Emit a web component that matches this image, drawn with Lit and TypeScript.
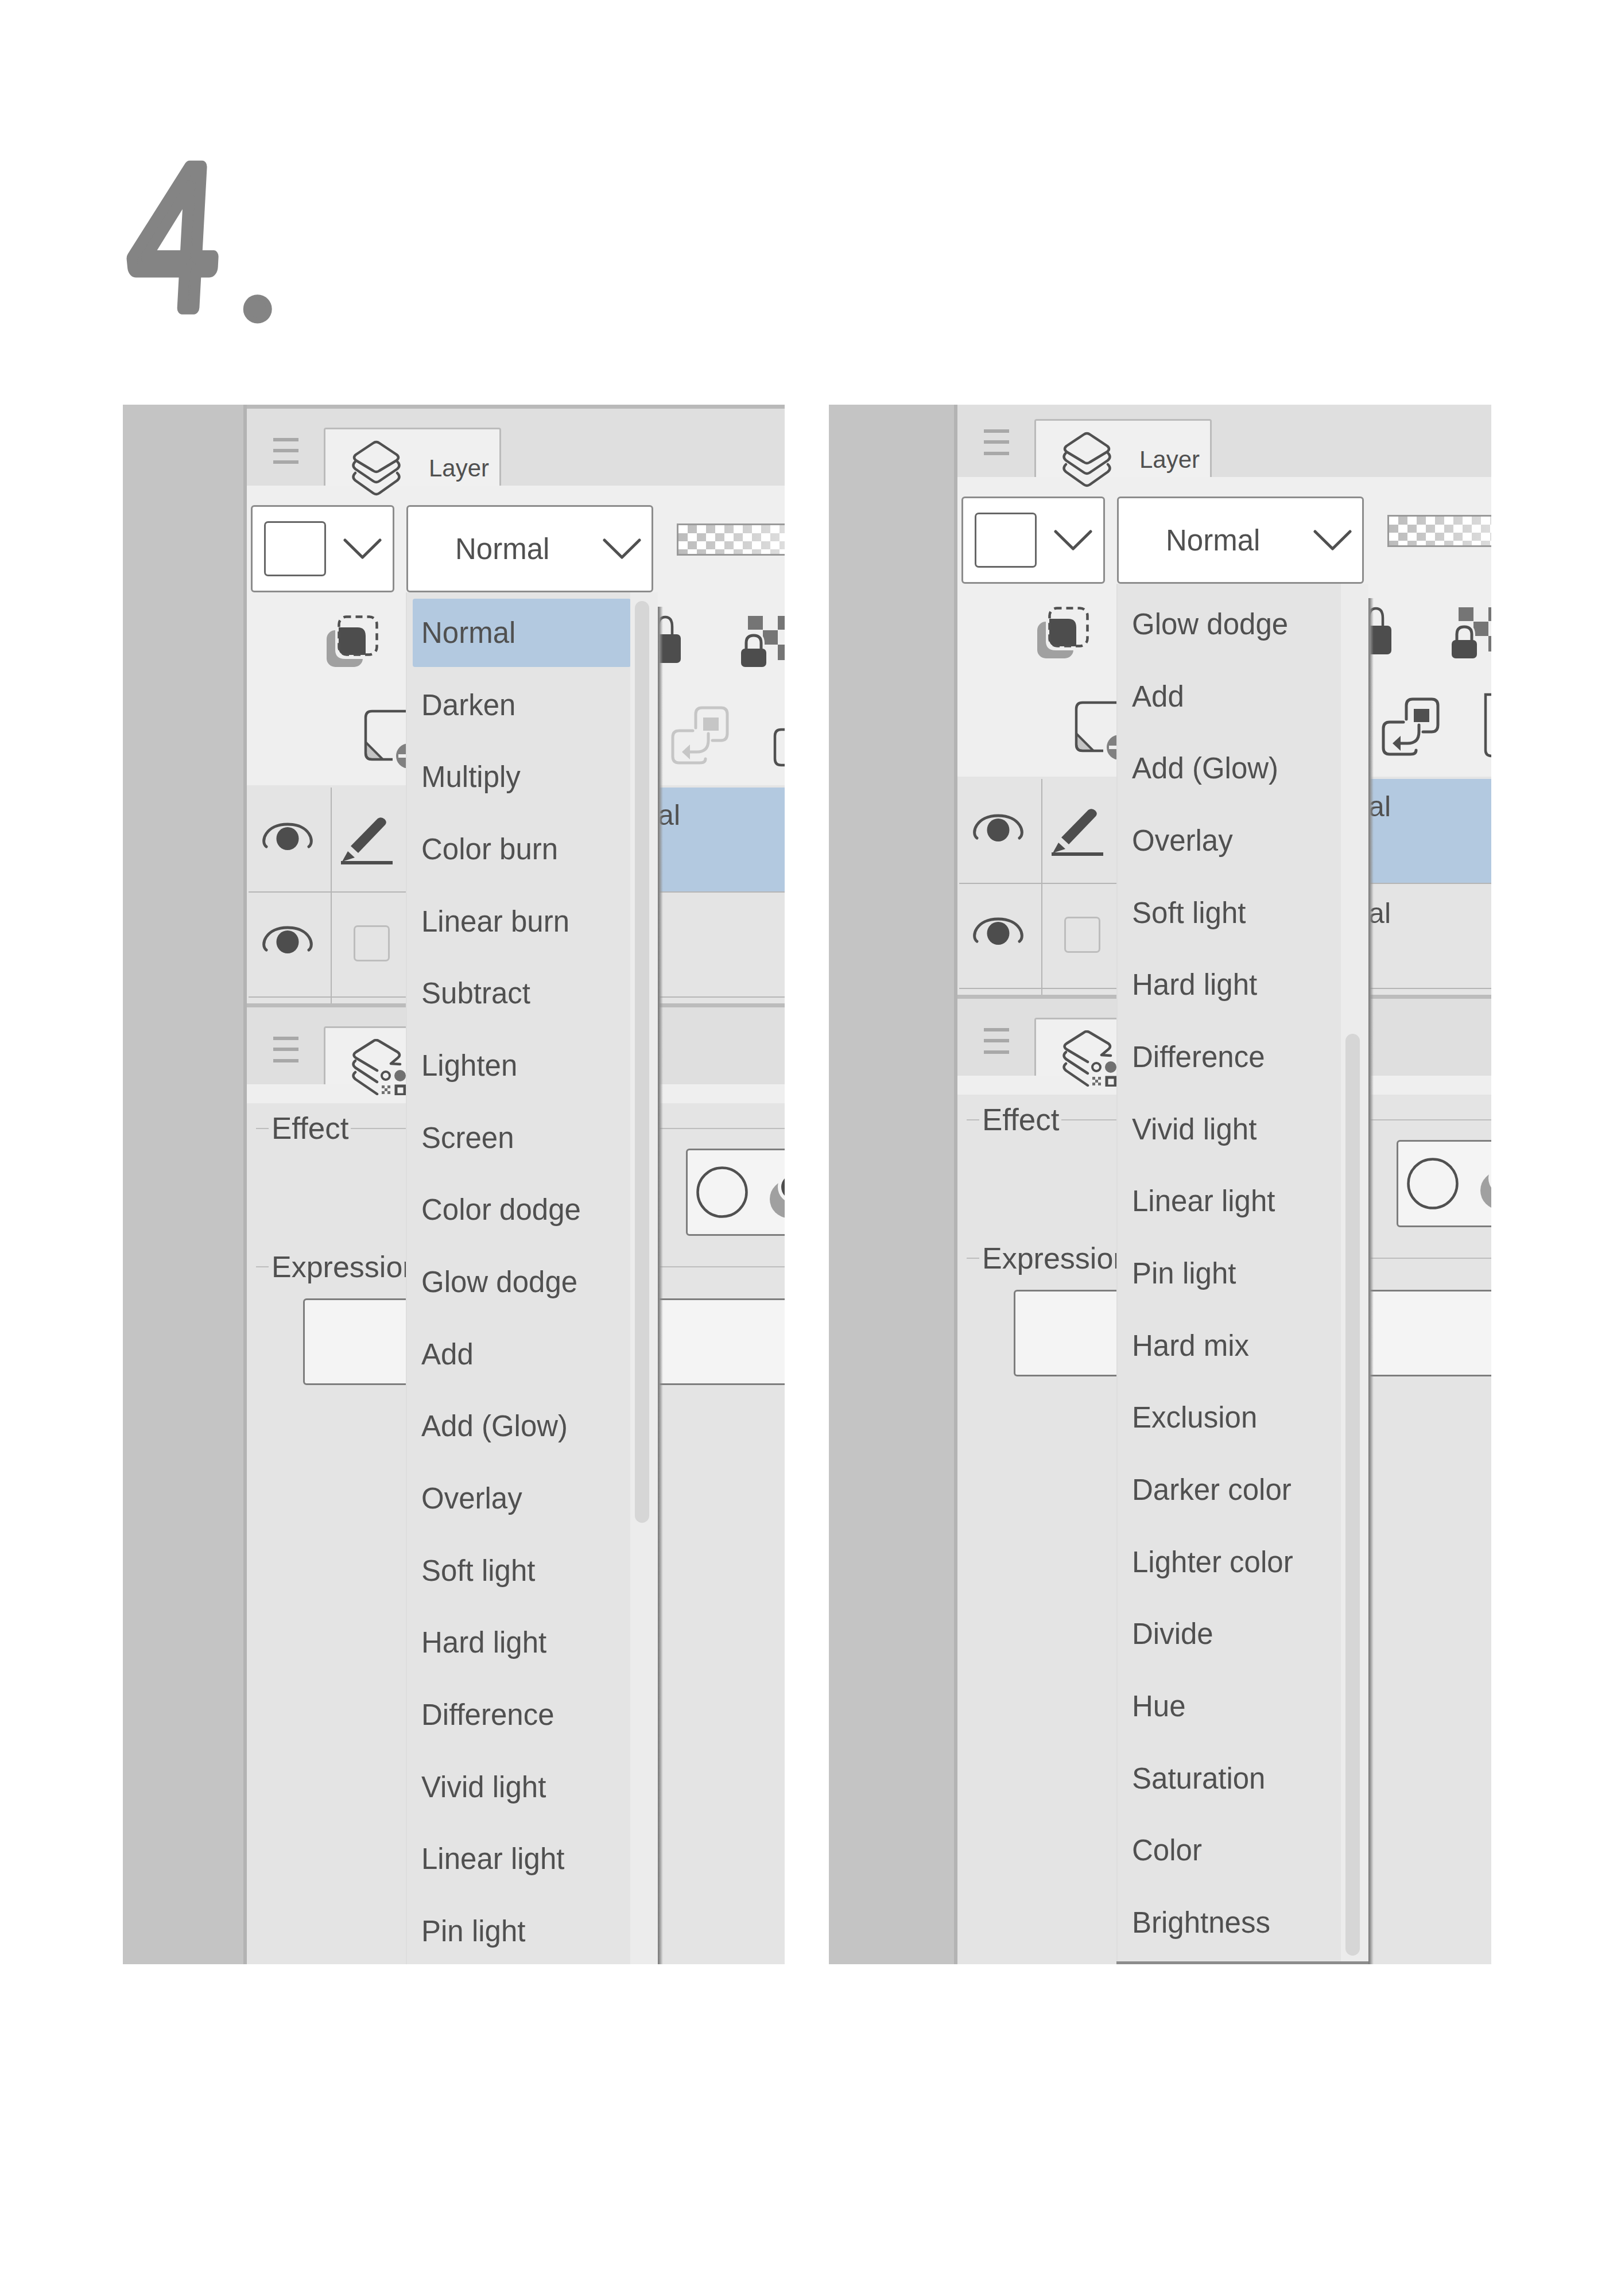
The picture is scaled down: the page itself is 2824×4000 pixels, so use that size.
import { LitElement, html, css, svg } from 'lit';
import { customElement, property } from 'lit/decorators.js';

const BLEND_TOP = ['Normal', 'Darken', 'Multiply', 'Color burn', 'Linear burn', 'Subtract', 'Lighten', 'Screen', 'Color dodge', 'Glow dodge', 'Add', 'Add (Glow)', 'Overlay', 'Soft light', 'Hard light', 'Difference', 'Vivid light', 'Linear light', 'Pin light'];
const BLEND_BOTTOM = ['Glow dodge', 'Add', 'Add (Glow)', 'Overlay', 'Soft light', 'Hard light', 'Difference', 'Vivid light', 'Linear light', 'Pin light', 'Hard mix', 'Exclusion', 'Darker color', 'Lighter color', 'Divide', 'Hue', 'Saturation', 'Color', 'Brightness'];

const DARK = '#505050';

// icons, all drawn at the size they have in the reference
const chevron = html`<svg class="chevron" width="67" height="37" viewBox="0 0 67 37"><path d="M3 3 L33.5 33 L64 3" fill="none" stroke="${DARK}" stroke-width="5" stroke-linecap="round" stroke-linejoin="round"/></svg>`;

const menuIcon = html`<svg width="44" height="45" viewBox="0 0 44 45"><g fill="#a8a8a8"><rect y="0" width="44" height="6"/><rect y="19" width="44" height="6"/><rect y="39" width="44" height="6"/></g></svg>`;

const layersIcon = html`<svg class="tab-icon" width="85" height="98" viewBox="0 0 85 98"><g fill="none" stroke="${DARK}" stroke-width="4.5" stroke-linejoin="round" stroke-linecap="round"><path d="M37 5 Q42.5 1 48 5 L78 25 Q84 30 78 35 L48 53 Q42.5 57 37 53 L7 35 Q1 30 7 25 Z"/><path d="M6 37 Q-1 44 6 50 L37 71 Q42.5 75 48 71 L79 50 Q86 44 79 37"/><path d="M6 57 Q-1 64 6 70 L37 92 Q42.5 96 48 92 L79 70 Q86 64 79 57"/></g></svg>`;

const propertyIcon = html`<svg class="tab-icon" width="97" height="98" viewBox="0 0 97 98"><g fill="none" stroke="${DARK}" stroke-width="4.5" stroke-linejoin="round" stroke-linecap="round"><path d="M44 55 L7 33 Q0 28 7 23 L37 4 Q42 0 48 4 L80 23 Q86 28 80 33 L68 43 L84 44"/><path d="M6 38 Q-1 44 6 50 L44 75"/><path d="M6 58 Q-1 64 6 70 L44 96"/></g><circle cx="59" cy="64" r="7" fill="none" stroke="${DARK}" stroke-width="4"/><circle cx="84" cy="64" r="10" fill="#707070"/><g fill="#707070"><rect x="52" y="81" width="5" height="5"/><rect x="62" y="81" width="5" height="5"/><rect x="57" y="86" width="5" height="5"/><rect x="52" y="91" width="5" height="5"/><rect x="62" y="91" width="5" height="5"/></g><rect x="77" y="82" width="15" height="15" fill="none" stroke="${DARK}" stroke-width="5"/></svg>`;

const selectionIcon = html`<svg width="90" height="90" viewBox="0 0 90 90"><rect x="0" y="26" width="63" height="64" rx="15" fill="#a0a0a0"/><path d="M15 15 H74 V76 H32 Q15 76 15 60 Z" fill="#efefef"/><path d="M21 21 H54 Q68 21 68 36 V69 H34 Q21 69 21 56 Z" fill="#4d4d4d"/><rect x="21.5" y="2.5" width="66" height="66" rx="13" fill="none" stroke="${DARK}" stroke-width="4.5" stroke-dasharray="12 8" stroke-dashoffset="4"/></svg>`;

const lockIcon = html`<svg width="44" height="90" viewBox="0 0 44 90"><path d="M5 35 V20 Q5 3 17 3 Q29 3 29 20 V35" fill="none" stroke="${DARK}" stroke-width="4.5"/><rect x="0" y="33" width="44" height="50" rx="7" fill="#4d4d4d"/></svg>`;

const checkerLockIcon = html`<svg width="90" height="90" viewBox="0 0 90 90"><g fill="#757575"><rect x="12" y="1" width="26" height="24"/><rect x="38" y="26" width="26" height="25"/><rect x="64" y="1" width="26" height="24"/><rect x="64" y="51" width="26" height="27"/></g><path d="M9 60 V48 Q9 35 22 35 Q35 35 35 48 V60" fill="none" stroke="#efefef" stroke-width="12"/><path d="M9 62 V48 Q9 35 22 35 Q35 35 35 48 V62" fill="none" stroke="${DARK}" stroke-width="5"/><rect x="0" y="58" width="44" height="32" rx="7" fill="#4d4d4d"/></svg>`;

const newLayerIcon = html`<svg width="108" height="108" viewBox="0 0 108 108"><path d="M3 63 L33 93 H14 Q3 93 3 82 Z" fill="#c4c4c4" stroke="${DARK}" stroke-width="4"/><path d="M90 9 H14 Q3 9 3 20 V82 Q3 93 14 93 H50" fill="none" stroke="${DARK}" stroke-width="4.5"/><circle cx="78" cy="87" r="22" fill="#808080"/><rect x="60" y="84" width="36" height="6" fill="#eee"/></svg>`;

const mergeIcon = (color: string) => html`<svg width="101" height="102" viewBox="0 0 101 102"><g fill="none" stroke="${color}" stroke-width="5" stroke-linecap="round"><path d="M43 38 V14 Q43 3 54 3 H87 Q98 3 98 14 V48 Q98 60 87 60 H72"/><path d="M38 43 H14 Q3 43 3 54 V88 Q3 99 14 99 H50 Q60 99 60 92"/><path d="M65 48 V60 Q65 80 45 80 H30"/></g><path d="M19 80 L33 67 V93 Z" fill="${color}"/><rect x="56" y="20" width="27" height="23" fill="${color}"/></svg>`;

const pageIcon = (tall: boolean) => svg`<svg class="page-icon" width="60" height="108" viewBox="0 0 60 108"><path d="${tall ? 'M60 -5 H3 V92 Q3 102 14 102 H60' : 'M60 41 H14 Q3 41 3 52 V92 Q3 103 14 103 H60'}" fill="${tall ? '#f4f4f4' : 'none'}" stroke="${DARK}" stroke-width="4.5"/></svg>`;

const eyeIcon = html`<svg width="90" height="49" viewBox="0 0 90 49"><path d="M8 42 C-3 34 6 3 45 3 C84 3 93 34 82 42" fill="none" stroke="${DARK}" stroke-width="5" stroke-linecap="round"/><ellipse cx="45" cy="28" rx="19.5" ry="20" fill="#4d4d4d"/></svg>`;

const pencilIcon = html`<svg width="90" height="84" viewBox="0 0 90 84"><path d="M64 3 Q70 -1 76 4 Q81 9 77 14 L30 63 L17 51 Z" fill="#4d4d4d"/><path d="M2 78 L12 60 L24 71 Z" fill="#4d4d4d"/><rect x="0" y="77" width="90" height="6" fill="#4d4d4d"/></svg>`;

@customElement('layer-panel')
class LayerPanel extends LitElement {
  static styles = css`
    :host {
      display: flex;
      height: 2717px;
      font-family: 'Liberation Sans', Arial, sans-serif;
      color: #505050;
    }

    .sidebar {
      background: #c4c4c4;
      border-right: 6px solid #b3b3b3;
      flex: none;
    }

    .main {
      flex: 1;
      min-width: 0;
      overflow: hidden;
    }

    .inner {
      position: relative;
      height: 2800px;
      background: #e4e4e4;
    }

    .top-line {
      height: 7px;
      background: #b9b9b9;
    }

    .tabbar {
      display: flex;
      height: 134px;
      background: #dfdfdf;
    }

    .menu-btn {
      width: 134px;
      padding: 51px 0 0 46px;
      box-sizing: border-box;
      flex: none;
    }

    .tab {
      display: flex;
      align-items: flex-start;
      box-sizing: border-box;
      height: 101px;
      margin-top: 33px;
      padding: 19px 0 0 46px;
      background: #f0f0f0;
      border: solid #bbb;
      border-width: 3px 3px 0 3px;
      border-radius: 4px 4px 0 0;
    }

    .tab.layer {
      width: 309px;
    }

    .tab.property {
      width: 420px;
    }

    .tab-icon {
      flex: none;
    }

    .tab-label {
      margin: 28px 0 0 49px;
      font-size: 42px;
      line-height: 42px;
    }

    .tools {
      height: 522px;
      box-sizing: border-box;
      padding-top: 34px;
      background: #efefef;
    }

    .selects {
      display: flex;
      align-items: flex-start;
      padding-left: 7px;
      gap: 21px;
    }

    .select {
      display: flex;
      align-items: center;
      box-sizing: border-box;
      height: 152px;
      background: #fff;
      border: 3px solid #8c8c8c;
      border-radius: 6px;
      flex: none;
    }

    .select.color {
      width: 250px;
      padding-left: 20px;
    }

    .select.blend {
      width: 430px;
      padding-left: 82px;
      font-size: 51px;
    }

    .swatch {
      box-sizing: border-box;
      flex: none;
      width: 108px;
      height: 96px;
      border: 3px solid #666;
      border-radius: 7px;
      background: #fff;
    }

    .chevron {
      flex: none;
    }

    .color .chevron {
      margin-left: 30px;
    }

    .blend .chevron {
      margin-left: auto;
      margin-right: 18px;
    }

    .opacity {
      box-sizing: border-box;
      flex: none;
      width: 340px;
      height: 56px;
      margin: 32px 0 0 20px;
      border: 3px solid #999;
      background:
        linear-gradient(90deg, rgba(255, 255, 255, 0), rgba(255, 255, 255, 0.9)),
        repeating-conic-gradient(from 90deg, #fff 0 25%, #bcbcbc 0 50%) 0 0 / 32px 28px;
    }

    .icons {
      display: flex;
      align-items: flex-start;
      height: 90px;
      margin-top: 40px;
      padding-left: 139px;
    }

    .icons > * {
      flex: none;
    }

    .icons.lower {
      height: 108px;
      margin-top: 68px;
      padding-left: 204px;
    }

    .lock {
      margin-left: 483px;
    }

    .checker-lock {
      margin-left: 105px;
    }

    .merge {
      margin-left: 427px;
    }

    .page {
      margin-left: 77px;
    }

    .page-icon {
      overflow: visible;
    }

    .layers {
      padding-top: 4px;
    }

    .row {
      display: flex;
      height: 183px;
      box-sizing: border-box;
      margin-left: 3px;
      border-bottom: 2px solid #b5b5b5;
    }

    .eye-cell {
      box-sizing: border-box;
      flex: none;
      width: 145px;
      padding: 61px 0 0 23px;
      border-right: 2px solid #b5b5b5;
    }

    .row.second .eye-cell {
      padding-top: 58px;
    }

    .kind-cell {
      flex: none;
      box-sizing: border-box;
      width: 131px;
      padding: 51px 0 0 16px;
    }

    .row.second .kind-cell {
      padding: 57px 0 0 38px;
    }

    .check {
      box-sizing: border-box;
      width: 63px;
      height: 63px;
      border: 3px solid #bdbdbd;
      border-radius: 7px;
    }

    .name-cell {
      flex: 1;
      width: 476px;
      padding-top: 18px;
      font-size: 50px;
      line-height: 60px;
    }

    .row.active .name-cell {
      background: #b3c9e0;
    }

    .row.second .name-cell {
      padding-top: 21px;
    }

    .name {
      display: block;
      width: 476px;
      text-align: right;
      white-space: nowrap;
    }

    .tail {
      box-sizing: border-box;
      width: 148px;
      height: 10px;
      border-right: 2px solid #b5b5b5;
    }

    .split {
      height: 7px;
      background: #bcbcbc;
    }

    .tab-foot {
      height: 33px;
      background: #efefef;
    }

    .group-title {
      display: flex;
      align-items: center;
      height: 60px;
      padding-left: 16px;
      font-size: 53px;
      line-height: 60px;
      white-space: nowrap;
    }

    .group-title.effect {
      margin-top: 14px;
    }

    .group-title.expression {
      margin-top: 24px;
      font-size: 52px;
    }

    .group-title::before {
      content: '';
      flex: none;
      width: 22px;
      height: 2px;
      margin-right: 5px;
      background: #bdbdbd;
    }

    .group-title::after {
      content: '';
      flex: 1;
      height: 2px;
      margin-left: 3px;
      background: #bdbdbd;
    }

    .effects {
      display: flex;
      align-items: center;
      box-sizing: border-box;
      width: 400px;
      height: 152px;
      margin: 5px 0 0 765px;
      padding-left: 15px;
      gap: 38px;
      background: #f4f4f4;
      border: 3px solid #7d7d7d;
      border-radius: 6px;
    }

    .effects svg {
      flex: none;
    }

    .expression-box {
      box-sizing: border-box;
      width: 1000px;
      height: 151px;
      margin: 25px 0 0 98px;
      background: #f4f4f4;
      border: 3px solid #7d7d7d;
      border-radius: 6px;
    }

    /* the open blend mode list lies over the whole panel */
    .menu {
      position: absolute;
      left: 277px;
      top: 327px;
      display: flex;
      width: 439px;
      background: #e4e4e4;
      box-sizing: border-box;
    }

    .menu::after {
      content: '';
      position: absolute;
      top: 25px;
      bottom: -5px;
      right: -9px;
      width: 9px;
      background: linear-gradient(90deg, #777, #8f8f8f 30%, rgba(140, 140, 140, 0));
    }

    .menu.ended {
      border-bottom: 5px solid #8c8c8c;
    }

    .list {
      display: flex;
      flex-direction: column;
      gap: 6.67px;
      box-sizing: border-box;
      width: 391px;
      padding: 11px 0 0 10px;
      border-left: 2px solid #dedede;
      font-size: 51px;
    }

    .item {
      box-sizing: border-box;
      flex: none;
      width: 380px;
      height: 119px;
      padding-left: 15px;
      line-height: 119px;
      border-radius: 4px;
      white-space: nowrap;
    }

    .item.selected {
      background: #b3c9e0;
    }

    .track {
      flex: 1;
      padding-left: 8px;
      background: #ececec;
    }

    .thumb {
      width: 25px;
      height: 1606px;
      border-radius: 13px;
      background: #d6d6d6;
    }
  `;

  @property({ type: Array }) items: string[] = [];
  @property({ type: Number }) selected = -1;
  @property({ type: Number }) sidebar = 210;
  @property({ type: Number }) scroll = 0;
  @property({ type: Number }) thumb = 15;
  @property({ type: Number }) menuHeight = 2500;
  @property({ type: Boolean }) ended = false;
  @property({ type: Boolean }) enabled = false;
  @property({ type: String }) second = '';

  render() {
    return html`
      <div class="sidebar" style="width:${this.sidebar}px"></div>
      <div class="main">
        <div class="inner" style="margin-top:${-this.scroll}px">
          <div class="top-line"></div>
          <div class="tabbar">
            <div class="menu-btn">${menuIcon}</div>
            <div class="tab layer">${layersIcon}<span class="tab-label">Layer</span></div>
          </div>
          <div class="tools">
            <div class="selects">
              <div class="select color"><div class="swatch"></div>${chevron}</div>
              <div class="select blend"><span>Normal</span>${chevron}</div>
              <div class="opacity"></div>
            </div>
            <div class="icons">
              ${selectionIcon}
              <div class="lock">${lockIcon}</div>
              <div class="checker-lock">${checkerLockIcon}</div>
            </div>
            <div class="icons lower">
              ${newLayerIcon}
              <div class="merge">${mergeIcon(this.enabled ? DARK : '#c6c6c6')}</div>
              <div class="page">${pageIcon(this.enabled)}</div>
            </div>
          </div>
          <div class="layers">
            <div class="row active">
              <div class="eye-cell">${eyeIcon}</div>
              <div class="kind-cell">${pencilIcon}</div>
              <div class="name-cell"><span class="name">100 % Normal</span></div>
            </div>
            <div class="row second">
              <div class="eye-cell">${eyeIcon}</div>
              <div class="kind-cell"><div class="check"></div></div>
              <div class="name-cell"><span class="name">${this.second}</span></div>
            </div>
            <div class="tail"></div>
          </div>
          <div class="split"></div>
          <div class="tabbar">
            <div class="menu-btn">${menuIcon}</div>
            <div class="tab property">${propertyIcon}</div>
          </div>
          <div class="tab-foot"></div>
          <div class="group-title effect">Effect</div>
          <div class="effects">
            <svg width="90" height="90" viewBox="0 0 90 90"><circle cx="45" cy="45" r="42.5" fill="none" stroke="${DARK}" stroke-width="4.5"/></svg>
            <svg width="90" height="90" viewBox="0 0 90 90"><circle cx="33" cy="57" r="33" fill="#a0a0a0"/><circle cx="42" cy="36" r="28" fill="#f4f4f4"/><circle cx="42" cy="36" r="22" fill="#4d4d4d"/></svg>
          </div>
          <div class="group-title expression">Expression</div>
          <div class="expression-box"></div>
          <div class="menu ${this.ended ? 'ended' : ''}" style="height:${this.menuHeight}px">
            <div class="list">
              ${this.items.map(
                (item, i) => html`<div class="item ${i === this.selected ? 'selected' : ''}">${item}</div>`,
              )}
            </div>
            <div class="track"><div class="thumb" style="margin-top:${this.thumb}px"></div></div>
          </div>
        </div>
      </div>
    `;
  }
}

@customElement('app-root')
export class AppRoot extends LitElement {
  static styles = css`
    :host {
      display: block;
      height: 4000px;
      background: #fff;
      overflow: hidden;
    }

    .numeral {
      box-sizing: border-box;
      height: 705px;
      padding: 260px 0 0 200px;
    }

    .numeral svg {
      display: block;
      overflow: visible;
    }

    .numeral text {
      font-family: Lato, 'Liberation Sans', sans-serif;
      fill: #848484;
      stroke: #848484;
      stroke-linejoin: round;
    }

    .digit {
      font-size: 375px;
      stroke-width: 26px;
    }

    .stop {
      font-size: 320px;
      stroke-width: 10px;
    }

    .panels {
      display: flex;
      padding-left: 214px;
      gap: 77px;
    }

    layer-panel.first {
      width: 1153px;
    }

    layer-panel.last {
      width: 1154px;
    }
  `;

  render() {
    return html`
      <div class="numeral">
        <svg width="400" height="320" viewBox="0 0 400 320">
          <text class="digit" transform="translate(22 276) scale(.7 .91) skewX(-4)">4</text>
          <text class="stop" x="211" y="296">.</text>
        </svg>
      </div>
      <div class="panels">
        <layer-panel class="first" .items=${BLEND_TOP} .selected=${0} .sidebar=${210} .thumb=${15}></layer-panel>
        <layer-panel
          class="last"
          .items=${BLEND_BOTTOM}
          .sidebar=${218}
          .scroll=${15}
          .thumb=${784}
          .menuHeight=${2405}
          .ended=${true}
          .enabled=${true}
          .second=${'100 % Normal'}
        ></layer-panel>
      </div>
    `;
  }
}
